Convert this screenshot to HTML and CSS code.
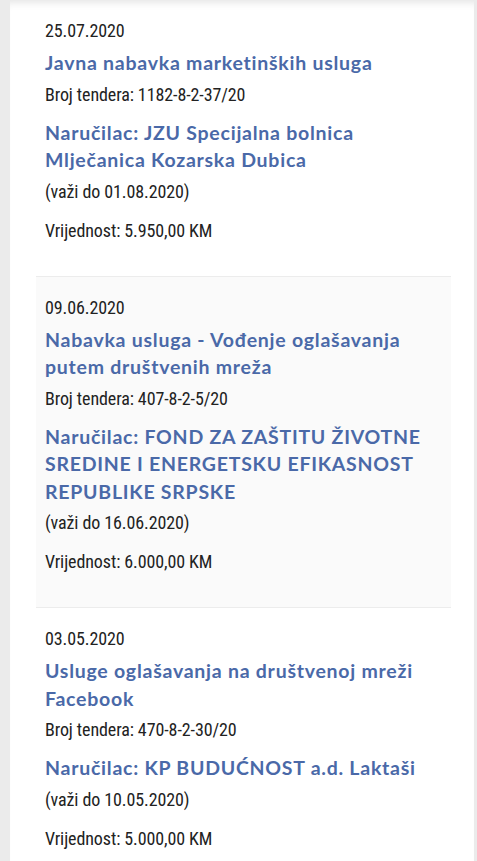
FILE: index.html
```html
<!DOCTYPE html>
<html lang="bs">
<head>
<meta charset="utf-8">
<title>Tenderi</title>
<link rel="stylesheet" href="styles.css">
</head>
<body>
<div class="page">
  <main class="card">
    <article class="tender">
      <div class="date">25.07.2020</div>
      <h2 class="title">Javna nabavka marketinških usluga</h2>
      <div class="num">Broj tendera: 1182-8-2-37/20</div>
      <h3 class="buyer">Naručilac: JZU Specijalna bolnica Mlječanica Kozarska Dubica</h3>
      <div class="valid">(važi do 01.08.2020)</div>
      <div class="value">Vrijednost: 5.950,00 KM</div>
    </article>
    <article class="tender alt">
      <div class="date">09.06.2020</div>
      <h2 class="title">Nabavka usluga - Vođenje oglašavanja putem društvenih mreža</h2>
      <div class="num">Broj tendera: 407-8-2-5/20</div>
      <h3 class="buyer">Naručilac: FOND ZA ZAŠTITU ŽIVOTNE SREDINE I ENERGETSKU EFIKASNOST REPUBLIKE SRPSKE</h3>
      <div class="valid">(važi do 16.06.2020)</div>
      <div class="value">Vrijednost: 6.000,00 KM</div>
    </article>
    <article class="tender">
      <div class="date">03.05.2020</div>
      <h2 class="title">Usluge oglašavanja na društvenoj mreži Facebook</h2>
      <div class="num">Broj tendera: 470-8-2-30/20</div>
      <h3 class="buyer">Naručilac: KP BUDUĆNOST a.d. Laktaši</h3>
      <div class="valid">(važi do 10.05.2020)</div>
      <div class="value">Vrijednost: 5.000,00 KM</div>
    </article>
  </main>
</div>
</body>
</html>
```

FILE: styles.css
```css
html, body {
  margin: 0;
  padding: 0;
  background: #ebebeb;
}
body {
  font-family: "Roboto Condensed", "Roboto", "Liberation Sans", sans-serif;
  font-stretch: condensed;
  color: #222;
}
.page {
  padding-left: 10px;
  padding-right: 3px;
  min-height: 861px;
}
.card {
  background: #fff;
  min-height: 861px;
  padding: 0 23px 0 26px;
  box-shadow: inset 0 9px 8px -7px rgba(0, 0, 0, 0.12);
}
.tender {
  padding: 19px 9px 33px 9px;
  border-bottom: 1px solid #ececec;
}
.tender.alt {
  background: #fafafa;
}
.tender:last-child {
  border-bottom: none;
}
.date, .num, .valid, .value {
  font-size: 18px;
  line-height: 24px;
  letter-spacing: -0.1px;
}
.title, .buyer {
  margin: 0;
  font-family: "Lato", "Open Sans", sans-serif;
  font-stretch: normal;
  font-weight: 700;
  font-size: 19.5px;
  line-height: 27.5px;
  letter-spacing: 0.75px;
  color: #4a69a8;
}
.title {
  margin-top: 6px;
}
.num {
  margin-top: 6px;
}
.buyer {
  margin-top: 12px;
}
.valid {
  margin-top: 6px;
}
.value {
  margin-top: 15px;
}
```
